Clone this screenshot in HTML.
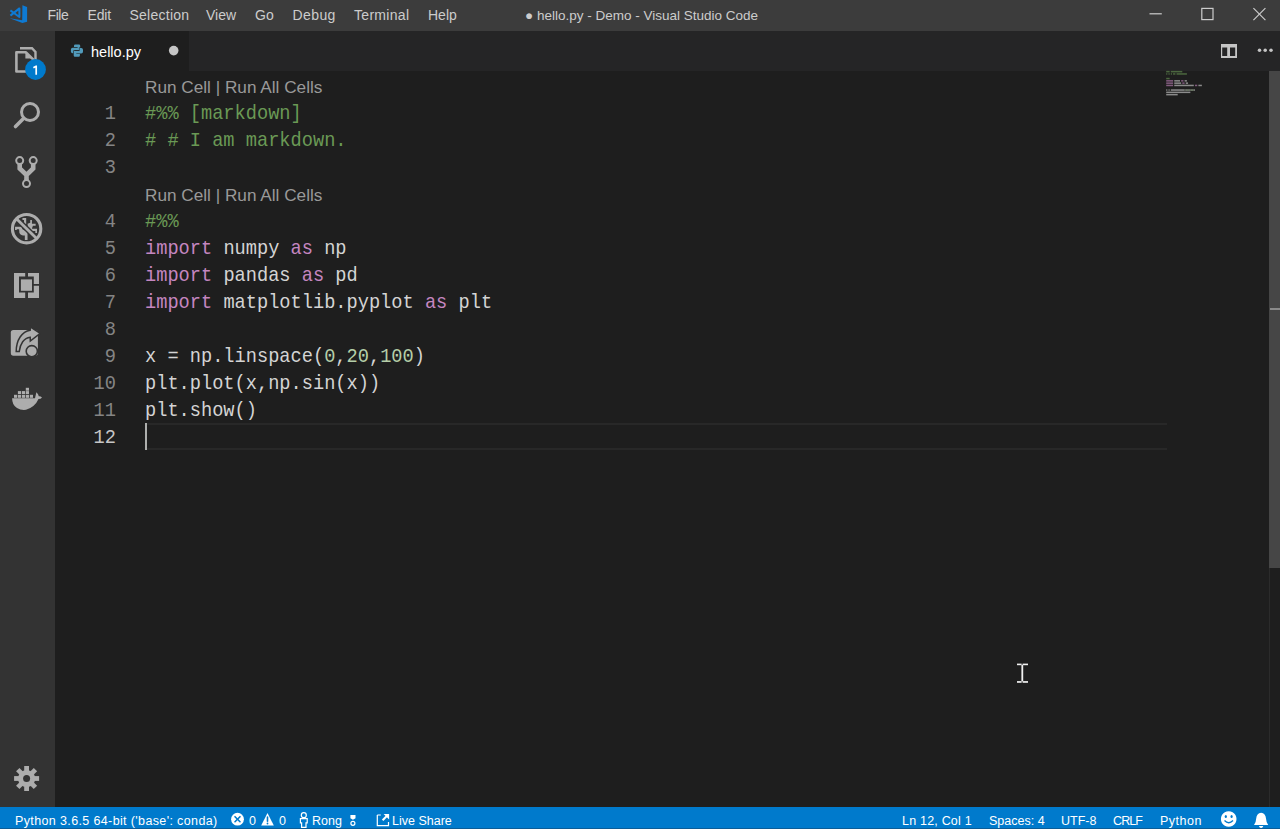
<!DOCTYPE html>
<html><head><meta charset="utf-8">
<style>
*{margin:0;padding:0;box-sizing:border-box}
html,body{width:1280px;height:829px;overflow:hidden;background:#1e1e1e;font-family:"Liberation Sans",sans-serif}
.abs{position:absolute}
svg{position:absolute;left:0;top:0;overflow:visible}
#title{left:0;top:0;width:1280px;height:31px;background:#3c3c3c}
.menu{position:absolute;top:0;height:31px;line-height:31px;font-size:14px;color:#cccccc;white-space:nowrap}
#act{left:0;top:31px;width:55px;height:776px;background:#333333}
#tabs{left:55px;top:31px;width:1225px;height:40px;background:#252526}
#tab{left:55px;top:31px;width:134px;height:40px;background:#1e1e1e}
#status{left:0;top:807px;width:1280px;height:22px;background:#007acc}
.st{position:absolute;top:2.5px;height:22px;line-height:22px;font-size:12.5px;color:#ffffff;white-space:nowrap}
.code{position:absolute;left:145px;height:27px;line-height:27px;padding-top:2.5px;font-family:"Liberation Mono",monospace;font-size:18.67px;color:#d4d4d4;white-space:pre;transform:scaleY(1.08);transform-origin:0 21px}
.ln{position:absolute;left:55px;width:61px;text-align:right;height:27px;line-height:27px;padding-top:2.5px;font-family:"Liberation Mono",monospace;font-size:18.67px;color:#858585;white-space:pre;transform:scaleY(1.08);transform-origin:0 21px}
.lens{position:absolute;left:145px;height:27px;line-height:27px;padding-top:3px;font-size:17.2px;color:#999999;white-space:pre}
.c{color:#6a9955}.k{color:#c586c0}.n{color:#b5cea8}
</style></head><body>
<div id="title" class="abs"></div>
<div class="menu" style="left:47.5px;letter-spacing:-0.4px">File</div>
<div class="menu" style="left:87.5px;letter-spacing:-0.2px">Edit</div>
<div class="menu" style="left:129.5px;letter-spacing:0.25px">Selection</div>
<div class="menu" style="left:206px">View</div>
<div class="menu" style="left:255px">Go</div>
<div class="menu" style="left:292.5px;letter-spacing:0.4px">Debug</div>
<div class="menu" style="left:354px;letter-spacing:0.3px">Terminal</div>
<div class="menu" style="left:428px">Help</div>
<div class="menu" style="left:525px;font-size:13.5px">● hello.py - Demo - Visual Studio Code</div>

<div id="act" class="abs"></div>
<div id="tabs" class="abs"></div>
<div id="tab" class="abs"></div>
<div class="abs" style="left:91px;top:31.7px;height:40px;line-height:40px;font-size:14.5px;color:#ffffff">hello.py</div>

<!-- current line highlight -->
<div class="abs" style="left:145px;top:423px;width:1022px;height:27px;border-top:2px solid #282828;border-bottom:2px solid #282828"></div>
<div class="abs" style="left:145px;top:423px;width:2px;height:27px;background:#aeafad"></div>

<div class="lens" style="top:71px">Run Cell | Run All Cells</div>
<div class="ln" style="top:98px">1</div><div class="code c" style="top:98px">#%% [markdown]</div>
<div class="ln" style="top:125px">2</div><div class="code c" style="top:125px"># # I am markdown.</div>
<div class="ln" style="top:152px">3</div>
<div class="lens" style="top:179px">Run Cell | Run All Cells</div>
<div class="ln" style="top:206px">4</div><div class="code c" style="top:206px">#%%</div>
<div class="ln" style="top:233px">5</div><div class="code" style="top:233px"><span class="k">import</span> numpy <span class="k">as</span> np</div>
<div class="ln" style="top:260px">6</div><div class="code" style="top:260px"><span class="k">import</span> pandas <span class="k">as</span> pd</div>
<div class="ln" style="top:287px">7</div><div class="code" style="top:287px"><span class="k">import</span> matplotlib.pyplot <span class="k">as</span> plt</div>
<div class="ln" style="top:314px">8</div>
<div class="ln" style="top:341px">9</div><div class="code" style="top:341px">x = np.linspace(<span class="n">0</span>,<span class="n">20</span>,<span class="n">100</span>)</div>
<div class="ln" style="top:368px">10</div><div class="code" style="top:368px">plt.plot(x,np.sin(x))</div>
<div class="ln" style="top:395px">11</div><div class="code" style="top:395px">plt.show()</div>
<div class="ln" style="top:422px;color:#c6c6c6">12</div>

<!-- scrollbar -->
<div class="abs" style="left:1269px;top:71px;width:1px;height:736px;background:#2b2b2b"></div>
<div class="abs" style="left:1269px;top:71px;width:11px;height:497px;background:#464646"></div>
<div class="abs" style="left:1270px;top:308px;width:10px;height:2px;background:#8a8a8a"></div>

<div id="status" class="abs">
<div class="st" style="left:15px;letter-spacing:0.37px">Python 3.6.5 64-bit ('base': conda)</div>
<div class="st" style="left:249px">0</div>
<div class="st" style="left:279px">0</div>
<div class="st" style="left:312px">Rong</div>
<div class="st" style="left:392px">Live Share</div>
<div class="st" style="left:902px;letter-spacing:0.2px">Ln 12, Col 1</div>
<div class="st" style="left:989px">Spaces: 4</div>
<div class="st" style="left:1061px">UTF-8</div>
<div class="st" style="left:1113px;letter-spacing:-0.9px">CRLF</div>
<div class="st" style="left:1160px;letter-spacing:0.5px">Python</div>
</div>

<svg width="1280" height="829" viewBox="0 0 1280 829">
<!-- VS Code logo -->
<g fill="#0e7ad3">
<path d="M22.4,5.2 L27.1,7 L27.1,21.7 L22.4,23 L9.7,18.3 L22.2,20.2 Z"/>
</g>
<path d="M10.4,10.4 L19.4,17 L19.4,8.4 L10.4,15.6" fill="none" stroke="#0e7ad3" stroke-width="2" stroke-linejoin="round"/>
<!-- window controls -->
<g stroke="#cccccc" stroke-width="1.2" fill="none">
<line x1="1149.5" y1="13.8" x2="1161.8" y2="13.8"/>
<rect x="1201.8" y="8.4" width="11.2" height="11.2"/>
<line x1="1253.4" y1="8.2" x2="1265.4" y2="20.2"/>
<line x1="1265.4" y1="8.2" x2="1253.4" y2="20.2"/>
</g>
<!-- tab python icon -->
<g fill="#519aba">
<path id="py" d="M75.2,44.5 H79 Q80.2,44.5 80.2,45.7 V50.2 H74.4 V53.2 H72.6 Q70.9,53.2 70.9,51.4 V49.5 Q70.9,47.7 72.7,47.7 H77.6 V47.1 H74 V45.7 Q74,44.5 75.2,44.5 Z"/>
<use href="#py" transform="rotate(180 76.95 50.6)" stroke="#1e1e1e" stroke-width="1.1" paint-order="stroke"/>
</g>
<!-- dirty dot -->
<circle cx="173.7" cy="50.6" r="4.8" fill="#c5c5c5"/>
<!-- split editor -->
<g fill="#c5c5c5">
<path d="M1221,44 h16 v14 h-16 Z M1222.2,47.5 v8.5 h5 v-8.5 Z M1230,47.5 v8.5 h5.2 v-8.5 Z" fill-rule="evenodd"/>
<circle cx="1259.5" cy="50.3" r="1.75"/>
<circle cx="1265.2" cy="50.3" r="1.75"/>
<circle cx="1271" cy="50.3" r="1.75"/>
</g>

<!-- minimap -->
<g opacity="0.6">
<rect x="1166.20" y="70.90" width="3.45" height="1.5" fill="#6a9955"/>
<rect x="1170.80" y="70.90" width="11.50" height="1.5" fill="#6a9955"/>
<rect x="1166.20" y="73.20" width="1.15" height="1.5" fill="#6a9955"/>
<rect x="1168.50" y="73.20" width="1.15" height="1.5" fill="#6a9955"/>
<rect x="1170.80" y="73.20" width="1.15" height="1.5" fill="#6a9955"/>
<rect x="1173.10" y="73.20" width="2.30" height="1.5" fill="#6a9955"/>
<rect x="1176.55" y="73.20" width="10.35" height="1.5" fill="#6a9955"/>
<rect x="1166.20" y="77.80" width="3.45" height="1.5" fill="#6a9955"/>
<rect x="1166.20" y="80.10" width="6.90" height="1.5" fill="#c586c0"/>
<rect x="1174.25" y="80.10" width="5.75" height="1.5" fill="#d4d4d4"/>
<rect x="1181.15" y="80.10" width="2.30" height="1.5" fill="#c586c0"/>
<rect x="1184.60" y="80.10" width="2.30" height="1.5" fill="#d4d4d4"/>
<rect x="1166.20" y="82.40" width="6.90" height="1.5" fill="#c586c0"/>
<rect x="1174.25" y="82.40" width="6.90" height="1.5" fill="#d4d4d4"/>
<rect x="1182.30" y="82.40" width="2.30" height="1.5" fill="#c586c0"/>
<rect x="1185.75" y="82.40" width="2.30" height="1.5" fill="#d4d4d4"/>
<rect x="1166.20" y="84.70" width="6.90" height="1.5" fill="#c586c0"/>
<rect x="1174.25" y="84.70" width="19.55" height="1.5" fill="#d4d4d4"/>
<rect x="1194.95" y="84.70" width="2.30" height="1.5" fill="#c586c0"/>
<rect x="1198.40" y="84.70" width="3.45" height="1.5" fill="#d4d4d4"/>
<rect x="1166.20" y="89.30" width="1.15" height="1.5" fill="#d4d4d4"/>
<rect x="1168.50" y="89.30" width="1.15" height="1.5" fill="#d4d4d4"/>
<rect x="1170.80" y="89.30" width="13.80" height="1.5" fill="#d4d4d4"/>
<rect x="1184.60" y="89.30" width="1.15" height="1.5" fill="#b5cea8"/>
<rect x="1185.75" y="89.30" width="1.15" height="1.5" fill="#d4d4d4"/>
<rect x="1186.90" y="89.30" width="2.30" height="1.5" fill="#b5cea8"/>
<rect x="1189.20" y="89.30" width="1.15" height="1.5" fill="#d4d4d4"/>
<rect x="1190.35" y="89.30" width="3.45" height="1.5" fill="#b5cea8"/>
<rect x="1193.80" y="89.30" width="1.15" height="1.5" fill="#d4d4d4"/>
<rect x="1166.20" y="91.60" width="24.15" height="1.5" fill="#d4d4d4"/>
<rect x="1166.20" y="93.90" width="11.50" height="1.5" fill="#d4d4d4"/>
</g>
<!-- activity bar icons -->
<g fill="none" stroke="#adadad">
<!-- explorer -->
<path d="M20,48.2 L32,48.2 L35.5,52 L35.5,60" stroke-width="2.4"/>
<path d="M16.4,52.3 L26,52.3 L33.4,59.7 L33.4,71.5 L16.4,71.5 Z" stroke-width="2.6" stroke-linejoin="round"/>
<path d="M25.4,52.5 L25.4,58.5 L32,58.5 Z" fill="#adadad" stroke="none"/>
<!-- search -->
<circle cx="30" cy="112" r="8.5" stroke-width="3"/>
<line x1="15.5" y1="126.5" x2="23.5" y2="118.5" stroke-width="3.6" stroke-linecap="round"/>
<!-- scm -->
<path d="M19.7,164 L19.7,168.5 L26.5,175 L33.2,168.5 L33.2,164 M26.5,174 L26.5,180" stroke-width="4.6"/>
<circle cx="19.7" cy="160.6" r="3.5" stroke-width="2" fill="#333333"/>
<circle cx="33.2" cy="160.6" r="3.5" stroke-width="2" fill="#333333"/>
<circle cx="26.5" cy="183.6" r="3.5" stroke-width="2" fill="#333333"/>
<!-- debug -->
</g>
<g transform="translate(12 214) scale(0.03378)" fill="#adadad">
<path d="M310,120 L420,120 L420,300 L355,300 L355,180 L310,180 Z"/>
<path d="M460,290 L540,260 L540,180 L590,180 L590,290 L700,290 L700,350 L620,350 L600,400 L590,440 L740,440 L740,560 L690,560 L690,500 L560,500 L470,400 Z"/>
<path d="M90,380 L290,380 L310,450 Q420,480 460,560 L460,640 L460,770 L380,770 L380,640 Q260,640 220,560 L210,450 L140,450 L140,470 L90,470 Z"/>
</g>
<line x1="16.5" y1="218.8" x2="36.6" y2="238.6" stroke="#333333" stroke-width="5.6"/>
<line x1="16.5" y1="218.8" x2="36.6" y2="238.6" stroke="#adadad" stroke-width="2.8"/>
<circle cx="26.6" cy="228.7" r="14.2" stroke-width="3.1" fill="none" stroke="#adadad"/>
<!-- remote explorer -->
<g fill="#adadad">
<path d="M14,273 H25.2 V276.6 H19 V292.6 H25.2 V298 H14 Z"/>
<path d="M28,273 H39 V284 H33.8 V276.6 H28 Z"/>
<path d="M28,292.6 H33.8 V285.8 H39 V298 H28 Z"/>
<rect x="20.9" y="279.4" width="11.1" height="11.4"/>
</g>
<!-- live share -->
<g fill="#adadad">
<rect x="10.8" y="329.9" width="27.1" height="25.8" rx="2.6"/>
<path d="M16.2,351.6 C16.2,340 22,331.5 30.2,330.2 L30.2,326.8 L40.2,333.4 L30.3,341 L30.2,337.2 C24,337.8 20,344 19.2,351.6 Z" stroke="#333333" stroke-width="1.5"/>
<circle cx="31.8" cy="351.2" r="5.6" stroke="#333333" stroke-width="1.6"/>
</g>
<!-- docker -->
<g fill="#adadad">
<rect x="14" y="394.8" width="3.2" height="3"/><rect x="17.9" y="394.8" width="3.2" height="3"/><rect x="21.9" y="394.8" width="3.2" height="3"/><rect x="25.8" y="394.8" width="3.2" height="3"/><rect x="29.8" y="394.8" width="3.2" height="3"/>
<rect x="17.9" y="391.1" width="3.2" height="2.9"/><rect x="21.9" y="391.1" width="3.2" height="2.9"/><rect x="25.8" y="391.1" width="3.2" height="2.9"/>
<rect x="25.8" y="387.8" width="3.2" height="2.9"/>
<path d="M12.1,398.2 L35,398.2 Q35.5,396 36.4,392.2 Q38.5,394 38.8,396.2 Q40.5,396 42,397.5 Q41,399 38.5,399 Q35,407 26,409.8 Q21,410.5 17,408 Q12.1,405 12.1,398.2 Z"/>
</g>
<!-- gear -->
<g fill="#adadad" transform="translate(26.6 778.5)">
<circle r="8.6"/>
<rect x="-2.4" y="-12.5" width="4.8" height="25"/>
<rect x="-2.4" y="-12.5" width="4.8" height="25" transform="rotate(45)"/>
<rect x="-2.4" y="-12.5" width="4.8" height="25" transform="rotate(90)"/>
<rect x="-2.4" y="-12.5" width="4.8" height="25" transform="rotate(135)"/>
<circle r="3.5" fill="#333333"/>
</g>
<!-- badge -->
<circle cx="35.5" cy="69.5" r="10.4" fill="#007acc"/>
<path d="M33.4,67.8 L36.2,66.2 L36.2,74.7" fill="none" stroke="#ffffff" stroke-width="1.7" stroke-linejoin="round"/>

<!-- status icons -->
<g fill="#ffffff">
<circle cx="237.5" cy="819.2" r="6.4"/>
<path d="M1228.7,811.2 a7.8,7.8 0 1,0 0.01,0 Z"/>
<path d="M1261.1,812.8 Q1256.6,813.5 1256.2,818.5 Q1256,822.6 1254,824.9 L1268.2,824.9 Q1266.2,822.6 1266,818.5 Q1265.6,813.5 1261.1,812.8 Z"/>
<path d="M1258.9,826 h4.4 q-0.6,1.9 -2.2,1.9 q-1.6,0 -2.2,-1.9 Z"/>
<path d="M267.5,813 L273.8,825.5 L261.2,825.5 Z"/>
</g>
<g stroke="#007acc" stroke-width="1.6" stroke-linecap="round">
<line x1="235" y1="816.7" x2="240" y2="821.7"/><line x1="240" y1="816.7" x2="235" y2="821.7"/>
<line x1="267.5" y1="817" x2="267.5" y2="821.3"/>
</g>
<circle cx="267.5" cy="823.5" r="0.9" fill="#007acc"/>
<g fill="#007acc">
<ellipse cx="1225.8" cy="816.5" rx="1.1" ry="1.5"/><ellipse cx="1231.6" cy="816.5" rx="1.1" ry="1.5"/>
</g>
<path d="M1224.5,820.5 Q1228.7,825 1233,820.5" stroke="#007acc" stroke-width="1.3" fill="none"/>
<g stroke="#ffffff" stroke-width="1.2" fill="none">
<circle cx="303.8" cy="815.2" r="2.5"/>
<path d="M300.4,818.6 h6.8 v4.2 h-1.2 v4.6 h-4.4 v-4.6 h-1.2 Z"/>
<path d="M377.3,815 h3.5 M377.3,815 v10.6 h11.2 v-3.5"/>
<path d="M382.6,820.2 L386.8,816" stroke-width="2"/>
<circle cx="352.9" cy="823.3" r="2"/>
</g>
<g fill="#ffffff">
<path d="M383.6,813.9 h5.5 v5.5 Z"/>
<path d="M350.4,815 h5.1 v3.2 l-2.55,1.5 l-2.55,-1.5 Z"/>
</g>
<!-- mouse ibeam -->
<g fill="#f0f0f0">
<rect x="1017" y="663.6" width="4.6" height="1.6"/>
<rect x="1022.6" y="663.6" width="5.4" height="1.6"/>
<rect x="1021.4" y="664.8" width="1.8" height="16.6"/>
<rect x="1017" y="681.1" width="4.6" height="1.7"/>
<rect x="1022.6" y="681.1" width="5.4" height="1.7"/>
</g>
</svg>
<div class="abs" style="left:0;top:828px;width:1280px;height:1px;background:#0b5d98"></div>
</body></html>
